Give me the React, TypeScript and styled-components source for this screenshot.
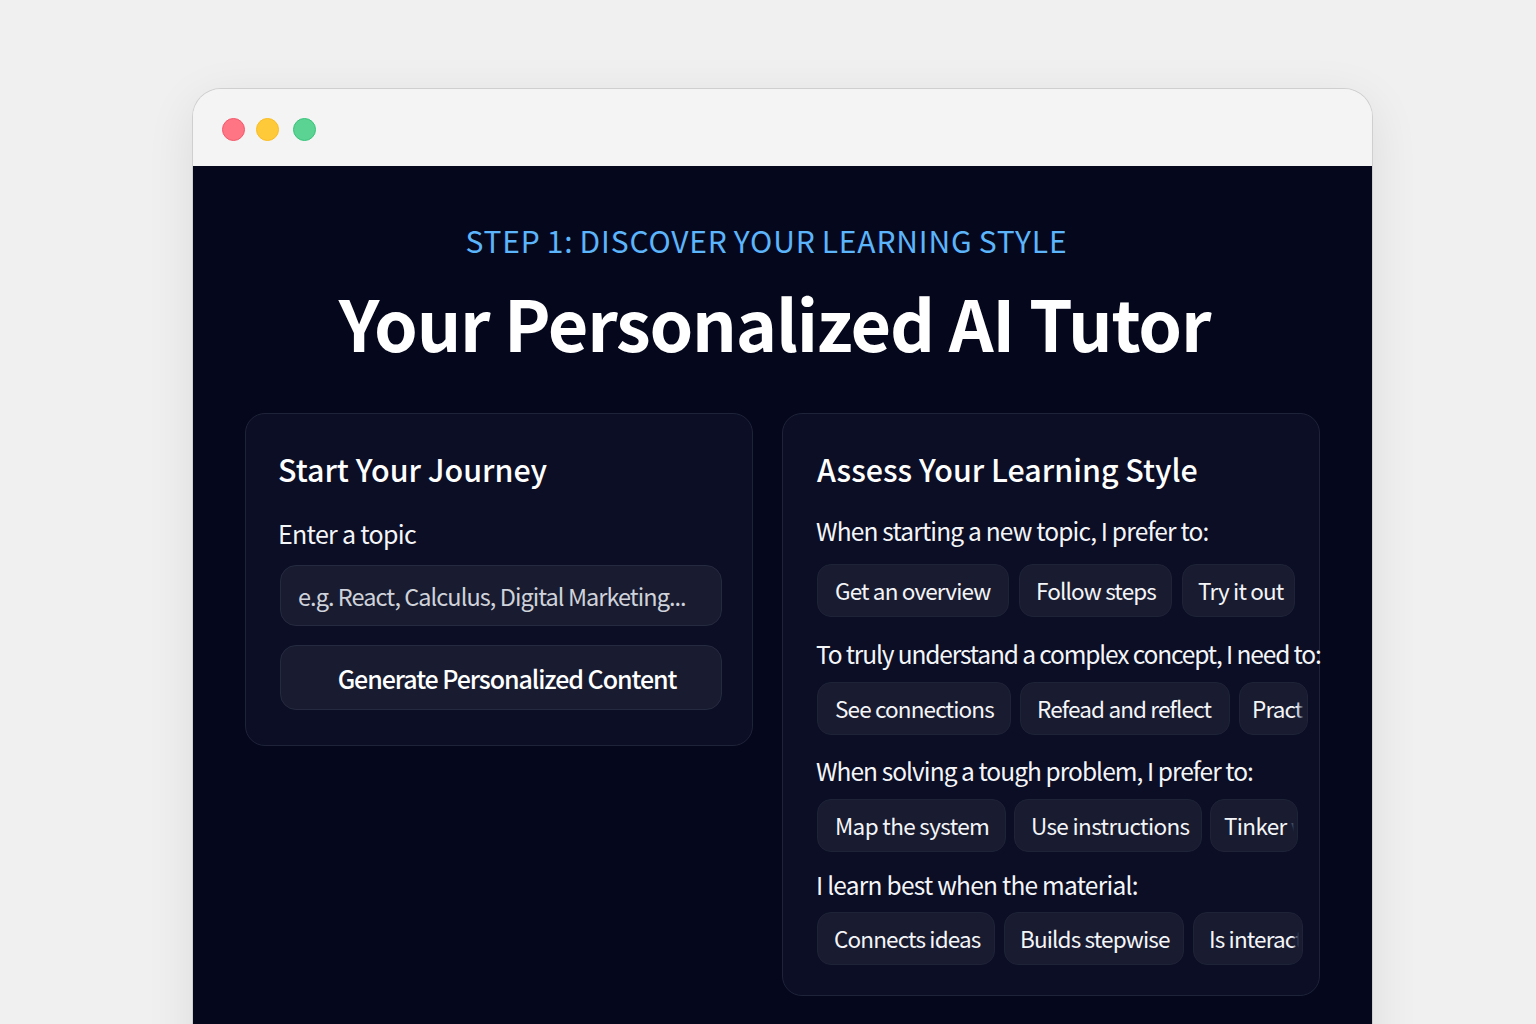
import styled, { createGlobalStyle } from "styled-components";

interface Chip {
  label: string;
  width: number;
  pad?: number;
  clipped?: boolean;
}

interface Question {
  text: string;
  gap: number;
  labelTop: number;
  labelBottom: number;
  tracking: number;
  chipTracking?: number;
  chips: Chip[];
}

const questions: Question[] = [
  {
    text: "When starting a new topic, I prefer to:",
    gap: 10,
    labelTop: 21,
    labelBottom: 15,
    tracking: -0.82,
    chips: [
      { label: "Get an overview", width: 192 },
      { label: "Follow steps", width: 153, pad: 16 },
      { label: "Try it out", width: 113, pad: 15 },
    ],
  },
  {
    text: "To truly understand a complex concept, I need to:",
    gap: 9,
    labelTop: 19,
    labelBottom: 10,
    tracking: -1.14,
    chips: [
      { label: "See connections", width: 194 },
      { label: "Refead and reflect", width: 210, pad: 16 },
      { label: "Practice", width: 69, pad: 12, clipped: true },
    ],
  },
  {
    text: "When solving a tough problem, I prefer to:",
    gap: 8,
    labelTop: 18,
    labelBottom: 10,
    tracking: -0.95,
    chipTracking: -0.65,
    chips: [
      { label: "Map the system", width: 189 },
      { label: "Use instructions", width: 188, pad: 16 },
      { label: "Tinker with it", width: 88, pad: 13, clipped: true },
    ],
  },
  {
    text: "I learn best when the material:",
    gap: 9,
    labelTop: 15,
    labelBottom: 9,
    tracking: -0.75,
    chips: [
      { label: "Connects ideas", width: 178, pad: 16 },
      { label: "Builds stepwise", width: 180, pad: 15 },
      { label: "Is interactive", width: 110, pad: 15, clipped: true },
    ],
  },
];

function App() {
  return (
    <>
      <GlobalStyle />
      <Page>
        <BrowserWindow>
          <TitleBar>
            <Dot $bg="#ff7583" $edge="#f3596b" />
            <Dot $bg="#ffca3a" $edge="#fbbc1e" />
            <Dot $bg="#5bd393" $edge="#37c47a" $left={3} />
          </TitleBar>
          <Content>
            <Eyebrow>STEP 1: DISCOVER YOUR LEARNING STYLE</Eyebrow>
            <Title>Your Personalized AI Tutor</Title>
            <Columns>
              <JourneyPanel>
                <PanelTitle>Start Your Journey</PanelTitle>
                <TopicLabel>Enter a topic</TopicLabel>
                <TopicInput readOnly placeholder="e.g. React, Calculus, Digital Marketing..." />
                <GenerateButton>Generate Personalized Content</GenerateButton>
              </JourneyPanel>
              <AssessPanel>
                <PanelTitle>Assess Your Learning Style</PanelTitle>
                {questions.map((q) => (
                  <div key={q.text}>
                    <QuestionText $top={q.labelTop} $bottom={q.labelBottom} $tracking={q.tracking}>
                      {q.text}
                    </QuestionText>
                    <ChipRow $gap={q.gap}>
                      {q.chips.map((chip) => (
                        <ChipButton
                          key={chip.label}
                          $width={chip.width}
                          $pad={chip.pad ?? 17}
                          $tracking={q.chipTracking ?? -0.85}
                          $clipped={chip.clipped}
                        >
                          {chip.label}
                        </ChipButton>
                      ))}
                    </ChipRow>
                  </div>
                ))}
              </AssessPanel>
            </Columns>
          </Content>
        </BrowserWindow>
      </Page>
    </>
  );
}

const GlobalStyle = createGlobalStyle`
  html, body {
    margin: 0;
    height: 1024px;
    overflow: hidden;
    background: #f0f0f0;
  }
  * {
    box-sizing: border-box;
  }
`;

const Page = styled.div`
  height: 1024px;
  overflow: hidden;
  padding: 89px 164px 0 193px;
  background: #f0f0f0;
  font-family: "Noto Sans CJK SC", "Noto Sans", sans-serif;
`;

const BrowserWindow = styled.div`
  height: 1000px;
  border-radius: 28px 28px 0 0;
  overflow: hidden;
  box-shadow: 0 0 0 1px #cfcfcf, 0 12px 50px rgba(0, 0, 0, 0.09);
`;

const TitleBar = styled.div`
  height: 77px;
  display: flex;
  align-items: center;
  gap: 11px;
  padding: 3px 0 0 29px;
  background: #f4f4f4;
`;

const Dot = styled.span<{ $bg: string; $edge: string; $left?: number }>`
  width: 23px;
  height: 23px;
  border-radius: 50%;
  margin-left: ${(p) => p.$left ?? 0}px;
  background: ${(p) => p.$bg};
  border: 1px solid ${(p) => p.$edge};
`;

const Content = styled.div`
  height: 922px;
  padding: 52px 52px 0;
  background: #05081d;
  display: flex;
  flex-direction: column;
`;

const Eyebrow = styled.div`
  align-self: center;
  margin-right: 32px;
  color: #5cb5fb;
  font-size: 30px;
  line-height: 44px;
  font-weight: 400;
  letter-spacing: 0.85px;
  word-spacing: -1.5px;
  white-space: nowrap;
`;

const Title = styled.h1`
  align-self: center;
  margin: 14px 16px 0 0;
  color: #fff;
  font-size: 70px;
  line-height: 92px;
  font-weight: 600;
  letter-spacing: -1.2px;
  white-space: nowrap;
`;

const Columns = styled.div`
  display: flex;
  align-items: flex-start;
  gap: 29px;
  margin-top: 45px;
`;

const Panel = styled.section`
  border: 1px solid #1f2339;
  border-radius: 20px;
  background: #0b0e25;
`;

const JourneyPanel = styled(Panel)`
  width: 509px;
  height: 333px;
  padding: 32px 0 0 32px;
`;

const AssessPanel = styled(Panel)`
  width: 538px;
  height: 583px;
  padding: 32px 0 0 34px;
`;

const PanelTitle = styled.h2`
  margin: 0;
  color: #fff;
  font-size: 30.4px;
  line-height: 46px;
  font-weight: 500;
  white-space: nowrap;
`;

const TopicLabel = styled.div`
  margin-top: 22px;
  color: #f4f5f8;
  font-size: 25px;
  line-height: 38px;
  letter-spacing: -0.7px;
`;

const TopicInput = styled.input`
  display: block;
  width: 442px;
  height: 61px;
  margin: 13px 0 0 2px;
  padding: 0 17px;
  border: 1px solid #262a40;
  border-radius: 16px;
  outline: none;
  background: #191c30;
  font: inherit;
  font-size: 23.5px;
  letter-spacing: -0.95px;
  color: #d5d7df;

  &::placeholder {
    color: #cfd2da;
    opacity: 1;
  }
`;

const GenerateButton = styled.button`
  display: block;
  width: 442px;
  height: 65px;
  margin: 19px 0 0 2px;
  padding: 0 0 0 12px;
  border: 1px solid #262a40;
  border-radius: 16px;
  background: #191c30;
  font: inherit;
  font-size: 25px;
  font-weight: 500;
  letter-spacing: -1.07px;
  color: #fff;
`;

const QuestionText = styled.div<{ $top: number; $bottom: number; $tracking: number }>`
  margin: ${(p) => p.$top}px 0 ${(p) => p.$bottom}px -1px;
  color: #f4f5f8;
  font-size: 24.5px;
  line-height: 36px;
  letter-spacing: ${(p) => p.$tracking}px;
  white-space: nowrap;
`;

const ChipRow = styled.div<{ $gap: number }>`
  display: flex;
  gap: ${(p) => p.$gap}px;
`;

const ChipButton = styled.button<{
  $width: number;
  $pad: number;
  $tracking: number;
  $clipped?: boolean;
}>`
  position: relative;
  flex: none;
  width: ${(p) => p.$width}px;
  height: 53px;
  padding: 0 0 2px ${(p) => p.$pad}px;
  overflow: hidden;
  border: 1px solid #1f2338;
  border-radius: 14px;
  background: #191c30;
  font: inherit;
  font-size: 22.5px;
  letter-spacing: ${(p) => p.$tracking}px;
  color: #f4f5f8;
  text-align: left;
  white-space: nowrap;

  &::after {
    content: "";
    display: ${(p) => (p.$clipped ? "block" : "none")};
    position: absolute;
    top: 0;
    right: 0;
    bottom: 0;
    width: 10px;
    background: linear-gradient(to right, rgba(25, 28, 48, 0), #191c30 70%);
  }
`;

export default App;
